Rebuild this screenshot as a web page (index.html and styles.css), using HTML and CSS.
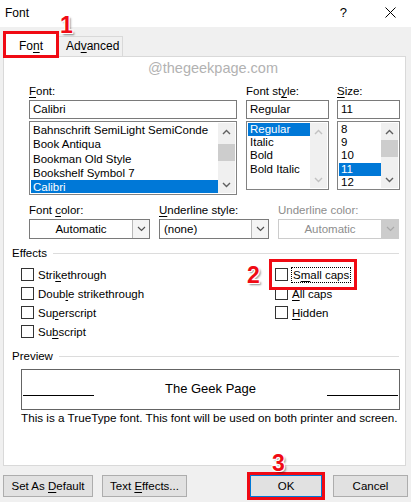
FILE: index.html
```html
<!DOCTYPE html>
<html lang="en">
<head>
    <meta charset="UTF-8">
    <title>Font</title>
    <link rel="stylesheet" href="styles.css">
</head>
<body>
    <div class="titlebar">
        <span class="title">Font</span>
        <span class="help">?</span>
        <svg class="close" width="11" height="11" viewBox="0 0 11 11"><path d="M0.5 0.5 L10.5 10.5 M10.5 0.5 L0.5 10.5" stroke="#000" stroke-width="1"/></svg>
    </div>

    <div class="tabs">
        <div class="tab active">Fo<u>n</u>t<span class="mark mark-1">1</span></div>
        <div class="tab">Ad<u>v</u>anced</div>
    </div>

    <div class="panel">
        <div class="watermark">@thegeekpage.com</div>

        <div class="pickers">
            <div class="picker picker-font">
                <div class="label"><u>F</u>ont:</div>
                <div class="field">Calibri</div>
                <div class="list">
                    <div class="items">
                        <div class="item">Bahnschrift SemiLight SemiConde</div>
                        <div class="item">Book Antiqua</div>
                        <div class="item">Bookman Old Style</div>
                        <div class="item">Bookshelf Symbol 7</div>
                        <div class="item selected">Calibri</div>
                    </div>
                    <div class="scroll">
                        <div class="arrow"><svg width="9" height="6" viewBox="0 0 9 6"><polyline points="1,5 4.5,1.5 8,5" fill="none" stroke="#606060" stroke-width="1.4"/></svg></div>
                        <div class="thumb thumb-font"></div>
                        <div class="spacer"></div>
                        <div class="arrow"><svg width="9" height="6" viewBox="0 0 9 6"><polyline points="1,1 4.5,4.5 8,1" fill="none" stroke="#606060" stroke-width="1.4"/></svg></div>
                    </div>
                </div>
            </div>
            <div class="picker picker-style">
                <div class="label">Font st<u>y</u>le:</div>
                <div class="field">Regular</div>
                <div class="list short">
                    <div class="items tight">
                        <div class="item selected">Regular</div>
                        <div class="item">Italic</div>
                        <div class="item">Bold</div>
                        <div class="item">Bold Italic</div>
                    </div>
                    <div class="scroll">
                        <div class="arrow"><svg width="9" height="6" viewBox="0 0 9 6"><polyline points="1,5 4.5,1.5 8,5" fill="none" stroke="#c2c2c2" stroke-width="1.4"/></svg></div>
                        <div class="spacer"></div>
                        <div class="arrow"><svg width="9" height="6" viewBox="0 0 9 6"><polyline points="1,1 4.5,4.5 8,1" fill="none" stroke="#c2c2c2" stroke-width="1.4"/></svg></div>
                    </div>
                </div>
            </div>
            <div class="picker picker-size">
                <div class="label"><u>S</u>ize:</div>
                <div class="field">11</div>
                <div class="list short">
                    <div class="items tight">
                        <div class="item">8</div>
                        <div class="item">9</div>
                        <div class="item">10</div>
                        <div class="item selected">11</div>
                        <div class="item">12</div>
                    </div>
                    <div class="scroll">
                        <div class="arrow"><svg width="9" height="6" viewBox="0 0 9 6"><polyline points="1,5 4.5,1.5 8,5" fill="none" stroke="#606060" stroke-width="1.4"/></svg></div>
                        <div class="thumb"></div>
                        <div class="spacer"></div>
                        <div class="arrow"><svg width="9" height="6" viewBox="0 0 9 6"><polyline points="1,1 4.5,4.5 8,1" fill="none" stroke="#606060" stroke-width="1.4"/></svg></div>
                    </div>
                </div>
            </div>
        </div>

        <div class="combos">
            <div class="combo-col wide">
                <div class="label">Font <u>c</u>olor:</div>
                <div class="combo">
                    <span class="value center">Automatic</span>
                    <span class="drop"><svg width="9" height="6" viewBox="0 0 9 6"><polyline points="1,1 4.5,4.5 8,1" fill="none" stroke="#505050" stroke-width="1.2"/></svg></span>
                </div>
            </div>
            <div class="combo-col mid">
                <div class="label"><u>U</u>nderline style:</div>
                <div class="combo">
                    <span class="value">(none)</span>
                    <span class="drop"><svg width="9" height="6" viewBox="0 0 9 6"><polyline points="1,1 4.5,4.5 8,1" fill="none" stroke="#505050" stroke-width="1.2"/></svg></span>
                </div>
            </div>
            <div class="combo-col wide disabled">
                <div class="label">Underline color:</div>
                <div class="combo">
                    <span class="value center">Automatic</span>
                    <span class="drop"><svg width="9" height="6" viewBox="0 0 9 6"><polyline points="1,1 4.5,4.5 8,1" fill="none" stroke="#a8a8a8" stroke-width="1.2"/></svg></span>
                </div>
            </div>
        </div>

        <div class="legend">Effects</div>
        <div class="effects">
            <div class="effects-col left">
                <div class="check"><span class="box"></span><span>Stri<u>k</u>ethrough</span></div>
                <div class="check"><span class="box"></span><span>Doub<u>l</u>e strikethrough</span></div>
                <div class="check"><span class="box"></span><span>Su<u>p</u>erscript</span></div>
                <div class="check"><span class="box"></span><span>Su<u>b</u>script</span></div>
            </div>
            <div class="effects-col">
                <div class="check highlighted"><span class="box"></span><span class="focus">S<u>m</u>all caps</span><span class="mark mark-2">2</span></div>
                <div class="check"><span class="box"></span><span><u>A</u>ll caps</span></div>
                <div class="check"><span class="box"></span><span><u>H</u>idden</span></div>
            </div>
        </div>

        <div class="legend preview-legend">Preview</div>
        <div class="preview">
            <div class="rule"></div>
            <div class="sample">The Geek Page</div>
            <div class="rule"></div>
        </div>
        <div class="note">This is a TrueType font. This font will be used on both printer and screen.</div>
    </div>

    <div class="buttons">
        <button class="btn btn-default">Set As <u>D</u>efault</button>
        <button class="btn btn-effects">Text <u>E</u>ffects...</button>
        <button class="btn btn-ok">OK<span class="mark mark-3">3</span></button>
        <button class="btn btn-cancel">Cancel</button>
    </div>
</body>
</html>
```

FILE: styles.css
```css
body {
    margin: 0;
    width: 411px;
    height: 502px;
    background: #f0f0f0;
    font-family: "Liberation Sans", Arial, sans-serif;
    font-size: 11.5px;
    color: #000;
    overflow: hidden;
}
u {
    text-decoration-thickness: 1px;
    text-underline-offset: 2px;
}
.titlebar {
    height: 27px;
    background: #fff;
    display: flex;
    align-items: center;
    padding-left: 5px;
    padding-bottom: 2px;
    box-sizing: border-box;
}
.title {
    font-size: 12px;
    flex: 1;
}
.help {
    font-size: 13px;
    margin-right: 38px;
}
.close {
    margin-right: 15px;
}
.tabs {
    height: 29px;
    display: flex;
    align-items: flex-end;
    padding-left: 4px;
}
.tab {
    height: 20px;
    padding: 0 7px;
    line-height: 19px;
    border: 1px solid #d9d9d9;
    border-bottom: none;
    background: #f0f0f0;
    box-sizing: border-box;
    width: 65px;
    font-size: 12px;
}
.tab.active {
    position: relative;
    z-index: 1;
    height: 25px;
    width: 54px;
    margin-bottom: -1px;
    background: #fff;
    text-align: center;
    line-height: 26px;
    outline: 3px solid #f00a14;
    outline-offset: -2px;
}
.panel {
    margin-left: 3px;
    width: 403px;
    height: 410px;
    box-sizing: border-box;
    background: #fff;
    border: 1px solid #d9d9d9;
}
.watermark {
    margin-top: 3px;
    height: 16px;
    line-height: 16px;
    text-align: center;
    padding-left: 17px;
    color: #b2b2b2;
    font-size: 14.5px;
}
.label {
    line-height: 16px;
    height: 16px;
}
.pickers {
    display: flex;
    margin-top: 7px;
    padding-left: 25px;
}
.picker-font { width: 208px; margin-right: 9px; }
.picker-style { width: 83px; margin-right: 8px; }
.picker-size { width: 63px; }
.field {
    margin-top: 1px;
    height: 19px;
    box-sizing: border-box;
    border: 1px solid #7a7a7a;
    padding-left: 3px;
    line-height: 17px;
}
.list {
    margin-top: 2px;
    height: 74px;
    box-sizing: border-box;
    border: 1px solid #828282;
    display: flex;
    padding: 1px;
}
.list.short {
    height: 69px;
}
.items {
    flex: 1;
    line-height: 14.3px;
    white-space: nowrap;
    overflow: hidden;
}
.items.tight {
    line-height: 13.2px;
}
.item {
    padding-left: 2px;
}
.item.selected {
    background: #0078d7;
    color: #fff;
}
.scroll {
    width: 17px;
    background: #f0f0f0;
    display: flex;
    flex-direction: column;
}
.arrow {
    height: 17px;
    display: flex;
    align-items: center;
    justify-content: center;
}
.thumb {
    height: 17px;
    background: #cdcdcd;
}
.thumb-font {
    margin-top: 4px;
}
.spacer {
    flex: 1;
}
.combos {
    display: flex;
    margin-top: 7px;
    padding-left: 25px;
}
.combo-col.wide { width: 121px; }
.combo-col.mid { width: 110px; }
.combo-col + .combo-col { margin-left: 9px; }
.combo {
    margin-top: 1px;
    height: 20px;
    box-sizing: border-box;
    border: 1px solid #7a7a7a;
    display: flex;
}
.value {
    flex: 1;
    line-height: 18px;
    padding-left: 4px;
}
.value.center {
    text-align: center;
    padding-left: 0;
}
.drop {
    width: 16px;
    border-left: 1px solid #b8b8b8;
    background: #f4f4f4;
    display: flex;
    align-items: center;
    justify-content: center;
}
.disabled .label,
.disabled .value {
    color: #8d8d8d;
}
.disabled .combo {
    border-color: #cccccc;
}
.disabled .drop {
    background: #cccccc;
    border-left-color: #cccccc;
}
.legend {
    margin-top: 6px;
    padding-left: 8px;
    padding-right: 6px;
    line-height: 16px;
    display: flex;
    align-items: center;
    gap: 6px;
}
.legend::after {
    content: "";
    flex: 1;
    height: 1px;
    background: #dcdcdc;
}
.effects {
    display: flex;
    margin-top: 4px;
    padding-left: 17px;
}
.effects-col.left {
    width: 254px;
}
.check {
    height: 19px;
    display: flex;
    align-items: center;
}
.box {
    width: 13px;
    height: 13px;
    box-sizing: border-box;
    border: 1px solid #333;
    margin-right: 4px;
    background: #fff;
}
.check.highlighted {
    position: relative;
    display: inline-flex;
    outline: 3px solid #f00a14;
    outline-offset: 3px;
    padding-right: 1px;
}
.focus {
    outline: 1px dotted #000;
    padding: 0 1px;
    line-height: 14px;
}
.preview-legend {
    margin-top: 7px;
}
.preview {
    margin: 5px 0 0 17px;
    width: 379px;
    height: 41px;
    box-sizing: border-box;
    border: 1px solid #646464;
    display: grid;
    grid-template-columns: 71px 1fr 71px;
    padding: 0 1px;
}
.rule {
    height: 1px;
    background: #000;
    margin-top: 25px;
}
.sample {
    text-align: center;
    margin-top: 11px;
    line-height: 16px;
    font-size: 13px;
}
.note {
    padding-left: 17px;
    line-height: 16px;
    font-size: 11.7px;
    white-space: nowrap;
}
.buttons {
    display: flex;
    margin-top: 9px;
    padding-left: 3px;
}
.btn {
    height: 22px;
    box-sizing: border-box;
    border: 1px solid #adadad;
    background: #e1e1e1;
    font-family: inherit;
    font-size: 11.5px;
    padding: 0;
}
.btn-default { width: 90px; }
.btn-effects { width: 85px; margin-left: 9px; }
.btn-ok {
    width: 72px;
    margin-left: 63px;
    position: relative;
    border-color: #0078d7;
    outline: 3px solid #f00a14;
    outline-offset: 0;
}
.btn-cancel { width: 75px; margin-left: 11px; }
.mark {
    position: absolute;
    font-family: "Liberation Sans", Arial, sans-serif;
    font-weight: bold;
    font-size: 23px;
    color: #f00a14;
    line-height: 1;
    text-shadow: -1px -1px 0 #fff, 1px -1px 0 #fff, -1px 1px 0 #fff, 1px 1px 0 #fff, 2px 2px 2px rgba(0,0,0,0.45);
}
.mark-1 { left: 55px; top: -19px; }
.mark-2 { left: -28px; top: -1px; }
.mark-3 { left: 21px; top: -24px; }
```
